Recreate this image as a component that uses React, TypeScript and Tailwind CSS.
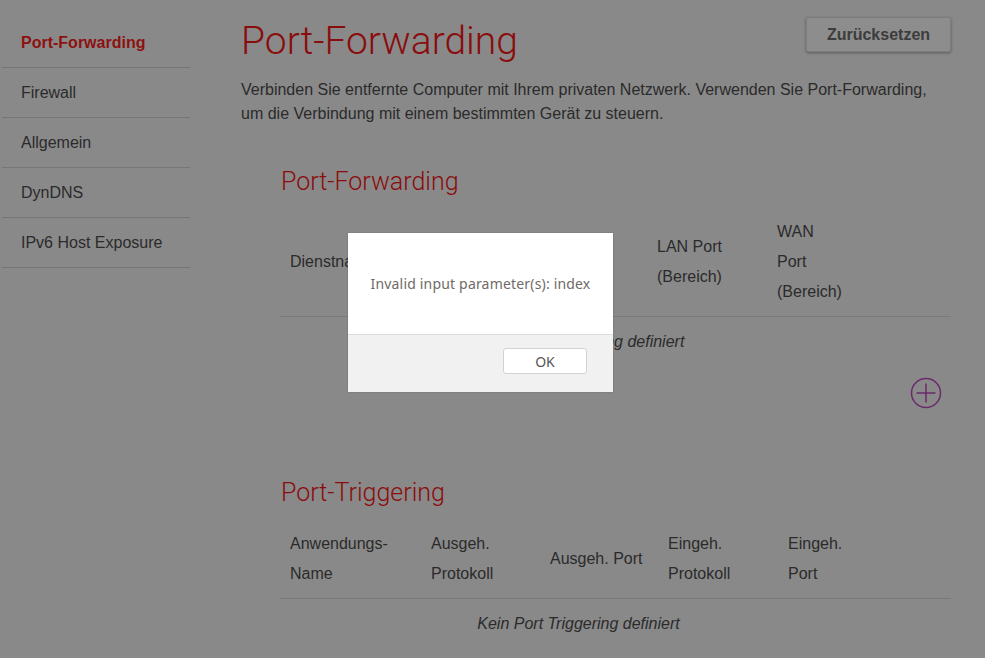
import React from "react";

const sans = { fontFamily: '"Liberation Sans", Arial, sans-serif' };
const light = { fontFamily: 'Roboto, "Liberation Sans", sans-serif' };
const noto = { fontFamily: '"Noto Sans", "Open Sans", sans-serif' };

const navItems = ["Port-Forwarding", "Firewall", "Allgemein", "DynDNS", "IPv6 Host Exposure"];

function Cell({ children }: { children: React.ReactNode }) {
  return <div className="px-[10px] leading-[30px]">{children}</div>;
}

export default function App() {
  return (
    <div className="relative min-h-[658px] w-[985px] overflow-hidden bg-[#898989] text-[#2b2b2b]" style={sans}>
      <div className="flex">
        {/* Sidebar */}
        <nav className="ml-[2px] mt-[18px] w-[188px] shrink-0">
          {navItems.map((item, i) => (
            <div
              key={item}
              className={`flex h-[50px] items-center border-b border-[#767676] pl-[19px] pt-[1px] text-[16px] ${
                i === 0 ? "font-bold text-[#8d1111]" : "text-[#2b2b2b]"
              }`}
            >
              {item}
            </div>
          ))}
        </nav>

        {/* Main */}
        <main className="ml-[51px] w-[710px]">
          <div className="flex items-start justify-between pt-[17px]">
            <h1 className="text-[39px] font-light leading-[48px] text-[#8a0d0d]" style={light}>
              Port-Forwarding
            </h1>
            <button className="h-[35px] w-[145px] rounded-[2px] border border-[#7d7d7d] bg-[#8d8d8d] text-[16px] font-bold text-[#3c3c3c] shadow-[0_1px_3px_rgba(0,0,0,0.35)]">
              Zurücksetzen
            </button>
          </div>
          <p className="mt-[13px] text-[16px] leading-[24px] text-[#2b2b2b]">
            Verbinden Sie entfernte Computer mit Ihrem privaten Netzwerk. Verwenden Sie Port-Forwarding, um die
            Verbindung mit einem bestimmten Gerät zu steuern.
          </p>

          {/* Port-Forwarding section */}
          <section className="ml-[39px] mt-[40px]">
            <h2 className="pl-px text-[25px] font-light leading-[32px] text-[#8a0d0d]" style={light}>
              Port-Forwarding
            </h2>
            <div className="mt-[11px] grid grid-cols-[120px_127px_120px_120px_88px_1fr] items-center border-b border-[#7a7a7a] pb-[9px] pt-[8px] text-[16px]">
              <Cell>Dienstname</Cell>
              <Cell>Protokoll</Cell>
              <Cell>Gerät</Cell>
              <Cell>LAN Port (Bereich)</Cell>
              <Cell>WAN Port (Bereich)</Cell>
              <div />
            </div>
            <div className="w-[597px] py-[10px] text-center text-[16px] italic leading-[30px]">
              Kein Port Forwarding definiert
            </div>
            <div className="flex justify-end pr-[9px] pt-[10px]">
              <svg width="32" height="32" viewBox="0 0 32 32" fill="none" stroke="#6b2a6b" strokeWidth="1.5">
                <circle cx="16" cy="16" r="14.5" />
                <path d="M16 6.5v19M6.5 16h19" />
              </svg>
            </div>
          </section>

          {/* Port-Triggering section */}
          <section className="ml-[39px] mt-[68px]">
            <h2 className="pl-px text-[25px] font-light leading-[32px] text-[#8a0d0d]" style={light}>
              Port-Triggering
            </h2>
            <div className="mt-[12px] grid grid-cols-[141px_119px_118px_120px_90px_1fr] items-center border-b border-[#7a7a7a] pb-[9px] pt-[8px] text-[16px]">
              <Cell>Anwendungs-Name</Cell>
              <Cell>Ausgeh. Protokoll</Cell>
              <Cell>Ausgeh. Port</Cell>
              <Cell>Eingeh. Protokoll</Cell>
              <Cell>Eingeh. Port</Cell>
              <div />
            </div>
            <div className="w-[597px] py-[10px] text-center text-[16px] italic leading-[30px]">
              Kein Port Triggering definiert
            </div>
          </section>
        </main>
      </div>

      {/* Dialog */}
      <div className="absolute left-[348px] top-[233px] w-[265px] bg-white shadow-[0_0_2px_rgba(0,0,0,0.2)]" style={noto}>
        <div className="flex h-[102px] items-center justify-center border-b border-[#dcdcdc] text-[14px] tracking-[0.18px] text-[#6f6a66]">
          Invalid input parameter(s): index
        </div>
        <div className="flex h-[57px] items-start justify-end bg-[#f1f1f1] pr-[26px] pt-[13px]">
          <button className="h-[26px] w-[84px] rounded-[3px] border border-[#d2d2d2] bg-white text-[14px] text-[#555]">
            OK
          </button>
        </div>
      </div>
    </div>
  );
}
